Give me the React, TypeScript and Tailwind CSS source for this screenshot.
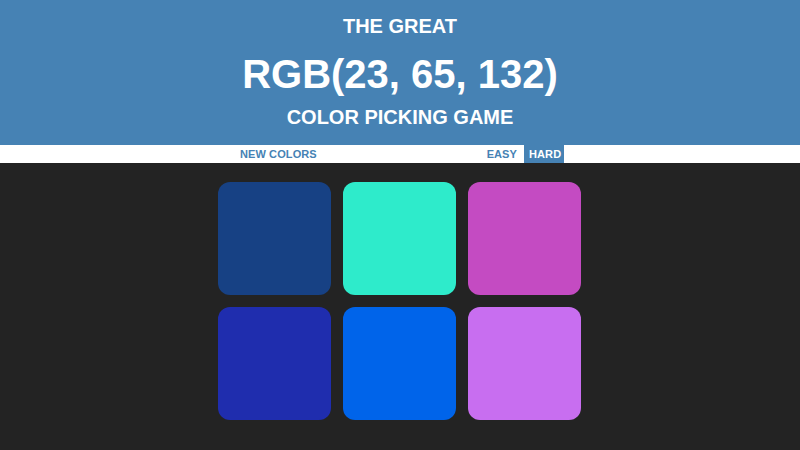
import React from "react";

const colors = ["#174184", "#2eebcb", "#c44bc2", "#1f2dae", "#0064ea", "#c86ef0"];

export default function App() {
  return (
    <div className="w-[800px] h-[450px] bg-[#232323] overflow-hidden" style={{ fontFamily: '"Liberation Sans", Arial, sans-serif' }}>
      <div className="h-[145px] bg-[#4682b4] text-white text-center font-bold pt-[14px]">
        <div className="text-[20px] leading-[24px]">THE GREAT</div>
        <div className="text-[40px] leading-[48px] mt-[12px]">RGB(23, 65, 132)</div>
        <div className="text-[20px] leading-[24px] mt-[7px]">COLOR PICKING GAME</div>
      </div>
      <div className="h-[18px] bg-white">
        <div className="w-[363px] ml-[218px] h-full flex items-stretch text-[11px] font-bold tracking-[0.1px] text-[#4682b4]">
          <button className="pl-[22px] leading-[18px] uppercase">NEW COLORS</button>
          <div className="flex-1" />
          <button className="px-[7px] leading-[18px]">EASY</button>
          <button className="px-[5px] w-[40px] leading-[18px] bg-[#4682b4] text-white mr-[17px]">HARD</button>
        </div>
      </div>
      <div className="w-[363px] ml-[218px] mt-[19px] grid grid-cols-3 gap-[12px]">
        {colors.map((c, i) => (
          <div key={i} className="h-[113px] rounded-[12px]" style={{ backgroundColor: c }} />
        ))}
      </div>
    </div>
  );
}
